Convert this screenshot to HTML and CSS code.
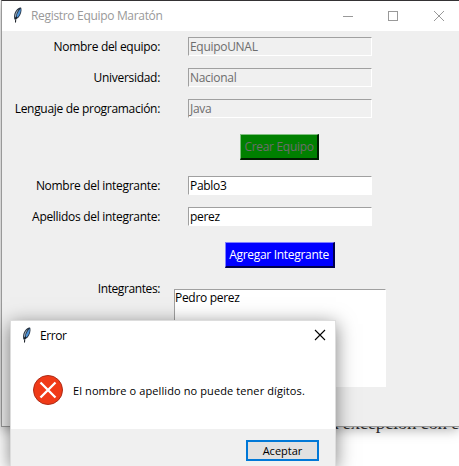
FILE: index.html
```html
<!DOCTYPE html>
<html lang="es">
<head>
<meta charset="utf-8">
<title>Registro Equipo Maratón</title>
<link rel="stylesheet" href="styles.css">
</head>
<body>
<svg class="defs" width="0" height="0">
  <symbol id="feather" viewBox="0 0 10 16">
    <path d="M1.400 12.500C.5 8.500 1.700 4 5 1.600 6.500.6 7.800.3 8.300 1 9 3.500 8 8 5.600 10.500 4.500 11.700 3 12 1.400 12.500Z" fill="#243140"/>
    <path d="M3.200 10.500C3.800 7 5.500 4 7.600 1.500 8.200 4 7 7.800 4.900 9.900Z" fill="#4c92d8"/>
    <path d="M2 10C2 7 3 4 5.800 2.200 4 5 3.200 7.500 2.600 10.500Z" fill="#a4b5c3"/>
    <path d="M2.500 15.500C2.500 13.500 2.800 11.500 3.500 9.500" fill="none" stroke="#0b1118" stroke-width="1"/>
  </symbol>
</svg>
<p class="document-text">a excepción con e</p>
<main class="window">
  <header class="titlebar">
    <svg class="feather"><use href="#feather"/></svg>
    <h1 class="title">Registro Equipo Maratón</h1>
    <svg class="controls" width="104" height="12" viewBox="0 0 104 12" fill="none" stroke="#999" shape-rendering="crispEdges">
      <path d="M0 6.500H10M45.500 1.500H54.500V10.500H45.500Z"/>
      <path d="M91 1L101 11M101 1L91 11" shape-rendering="auto"/>
    </svg>
  </header>
  <form class="form">
    <div class="row"><label>Nombre del equipo:</label><div class="entry disabled">EquipoUNAL</div></div>
    <div class="row"><label>Universidad:</label><div class="entry disabled">Nacional</div></div>
    <div class="row"><label>Lenguaje de programación:</label><div class="entry disabled">Java</div></div>
    <div class="action"><button type="button" class="button green">Crear Equipo</button></div>
    <div class="row"><label>Nombre del integrante:</label><div class="entry">Pablo3</div></div>
    <div class="row"><label>Apellidos del integrante:</label><div class="entry">perez</div></div>
    <div class="action"><button type="button" class="button blue">Agregar Integrante</button></div>
    <div class="row members"><label>Integrantes:</label><div class="listbox">Pedro perez</div></div>
  </form>
</main>
<section class="dialog">
  <header class="dialog-title">
    <svg class="feather"><use href="#feather"/></svg>
    <h2 class="title">Error</h2>
    <svg class="close" width="12" height="12" viewBox="0 0 12 12"><path d="M1 1L11 11M11 1L1 11" stroke="#000" stroke-width="1.100"/></svg>
  </header>
  <div class="message">
    <svg width="30" height="30" viewBox="0 0 30 30"><circle cx="15" cy="15" r="14.500" fill="#f03a17" stroke="#ad2c18"/><path d="M7.500 7.500L22.500 22.500M22.500 7.500L7.500 22.500" stroke="#fff" stroke-width="2.300"/></svg>
    <p>El nombre o apellido no puede tener dígitos.</p>
  </div>
  <footer class="dialog-footer"><button type="button" class="accept">Aceptar</button></footer>
</section>
</body>
</html>
```
FILE: styles.css
```css
* { box-sizing: border-box; }
body {
  margin: 0;
  width: 459px;
  height: 466px;
  overflow: hidden;
  position: relative;
  background: #fff;
  font: 12px/16px "Open Sans", "Noto Sans", sans-serif;
  color: #000;
}
h1, h2, p { margin: 0; font-size: 12px; font-weight: 400; }
button { font: inherit; padding: 0; border-radius: 0; white-space: nowrap; }
.defs { position: absolute; }
.window {
  position: absolute;
  left: 1px;
  top: 0;
  width: 458px;
  height: 427px;
  background: #efefef;
  border: 1px solid #999;
  border-top-color: #343234;
  border-right: 0;
  box-shadow: 0 2px 12px rgba(0, 0, 0, .35);
}
.document-text {
  position: absolute;
  right: 0;
  top: 411px;
  font: 19px/24px "Liberation Serif", serif;
  letter-spacing: -.4px;
  color: #333;
  white-space: nowrap;
}
.titlebar { display: flex; align-items: center; height: 30px; background: #fff; padding-left: 11px; }
.feather { width: 10px; height: 16px; flex: none; }
.titlebar .feather { margin-top: -2px; }
.titlebar .title { margin-left: 8px; width: 312px; color: #999; letter-spacing: -.32px; }
.controls { flex: none; margin-top: -1px; }
.form { padding-top: 6px; }
.row { display: flex; height: 19px; margin-bottom: 12px; }
.row label {
  width: 158px;
  margin-right: 28px;
  text-align: right;
  line-height: 19px;
  white-space: nowrap;
  letter-spacing: -.3px;
}
.entry {
  width: 184px;
  height: 19px;
  padding-left: 1px;
  line-height: 17px;
  background: #fff;
  border: 1px solid #a0a0a0;
  border-right-color: #fff;
  border-bottom-color: #fff;
  letter-spacing: -.3px;
}
.disabled { background: #f0f0f0; color: #6d6d6d; }
.action { display: flex; justify-content: center; padding-left: 98px; height: 26px; margin: 16px 0; }
.button {
  height: 26px;
  border: solid;
  border-width: 1px 2px 2px 1px;
  letter-spacing: -.3px;
}
.green { width: 79px; background: #008000; color: #6d6d6d; border-color: #80c080 #001c00 #001c00 #80c080; }
.blue { width: 110px; background: #00f; color: #fff; border-color: #8080ff #00004c #00004c #8080ff; }
.members { margin-top: 21px; margin-bottom: 0; }
.members label { margin-right: 14px; line-height: 0; letter-spacing: -.4px; }
.listbox {
  width: 212px;
  height: 98px;
  background: #fff;
  border: 1px solid #a0a0a0;
  border-right-color: #fff;
  border-bottom-color: #fff;
  letter-spacing: -.3px;
}
.dialog {
  position: absolute;
  left: 10px;
  top: 320px;
  width: 326px;
  height: 146px;
  background: #fff;
  border: 1px solid #ddd;
  border-bottom: 0;
  box-shadow: 0 4px 18px rgba(0, 0, 0, .5);
}
.dialog-title { display: flex; align-items: center; height: 29px; padding: 0 9px 0 11px; }
.dialog-title .feather { margin-top: -1px; }
.dialog-title .title { margin-left: 8px; letter-spacing: -.4px; }
.close { margin-left: auto; margin-top: -1px; }
.message { display: flex; align-items: center; height: 79px; padding: 1px 0 0 22px; }
.message p { margin-left: 10px; font-size: 11px; white-space: nowrap; letter-spacing: .1px; padding-top: 2px; }
.dialog-footer { height: 37px; background: #f0f0f0; padding: 11px 16px 0; display: flex; justify-content: flex-end; align-items: flex-start; }
.accept { width: 73px; height: 21px; border: 2px solid #0078d7; background: #e1e1e1; color: #000; font-size: 11px; line-height: 17px; }
```
